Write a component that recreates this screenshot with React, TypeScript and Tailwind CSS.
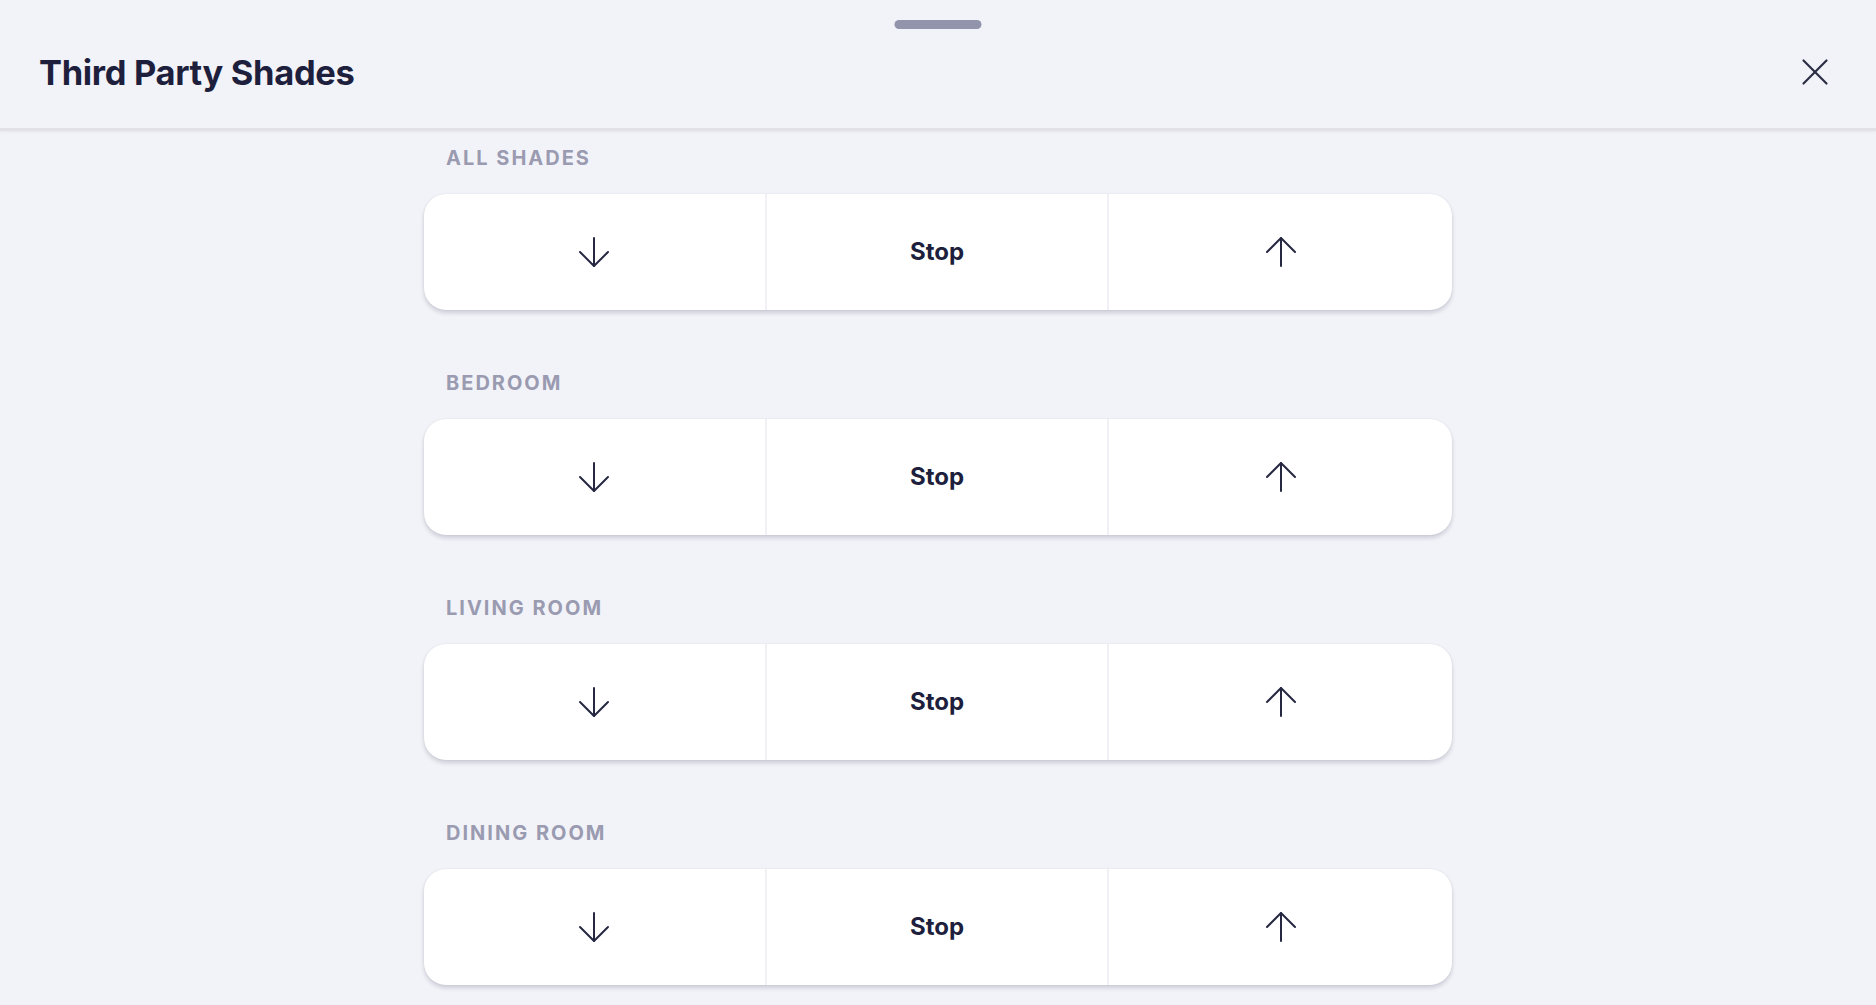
import { X } from 'lucide-react';

const rooms = ['All Shades', 'Bedroom', 'Living Room', 'Dining Room'];

const ArrowDown = () => (
  <svg width="32" height="32" viewBox="0 0 32 32" fill="none" stroke="#262842" strokeWidth="2" strokeLinecap="round" strokeLinejoin="round">
    <path d="M16 2v28" />
    <path d="M2 16l14 14 14-14" />
  </svg>
);

const ArrowUp = () => (
  <svg width="32" height="32" viewBox="0 0 32 32" fill="none" stroke="#262842" strokeWidth="2" strokeLinecap="round" strokeLinejoin="round">
    <path d="M16 30V2" />
    <path d="M2 16L16 2l14 14" />
  </svg>
);

const ShadeControl = ({ name }: { name: string }) => (
  <div className="mb-[61px]">
    <div className="h-6 pl-[22px] text-[20px] leading-6 font-bold uppercase tracking-[0.1em] text-[#9a9bb1]">
      {name}
    </div>
    <div className="mt-[24px] grid h-[116px] grid-cols-3 overflow-hidden rounded-[22px] bg-white shadow-[0_3px_4px_rgba(40,40,70,0.18),0_0_2px_rgba(40,40,70,0.08)]">
      <button className="flex items-center justify-center border-r-2 border-[#f0f0f5]">
        <ArrowDown />
      </button>
      <button className="flex items-center justify-center border-r-2 border-[#f0f0f5] text-[24px] font-bold text-[#1e1f3d]">
        Stop
      </button>
      <button className="flex items-center justify-center">
        <ArrowUp />
      </button>
    </div>
  </div>
);

export default function App() {
  return (
    <div className="flex h-screen flex-col overflow-hidden bg-[#f2f3f8] font-['Inter','Liberation_Sans',sans-serif]">
      <div className="relative z-10 flex h-[131px] shrink-0 items-center justify-between border-b-[3px] border-[#e1e1e7] bg-[#f2f3f8] pl-[39px] pr-[38px] shadow-[0_1px_3px_rgba(0,0,0,0.05)]">
        <div className="absolute left-1/2 top-[20px] h-[9px] w-[87px] -translate-x-1/2 rounded-full bg-[#9294ab]" />
        <h1 className="pt-[17px] text-[34.5px] font-bold tracking-[-0.01em] text-[#1e1f3d]">Third Party Shades</h1>
        <button className="pt-[16px] text-[#2b2d45]">
          <X size={46} strokeWidth={1.15} />
        </button>
      </div>
      <div className="flex-1 overflow-hidden">
        <div className="mx-auto w-[1028px] pt-[15px]">
          {rooms.map((r) => (
            <ShadeControl key={r} name={r} />
          ))}
        </div>
      </div>
    </div>
  );
}
